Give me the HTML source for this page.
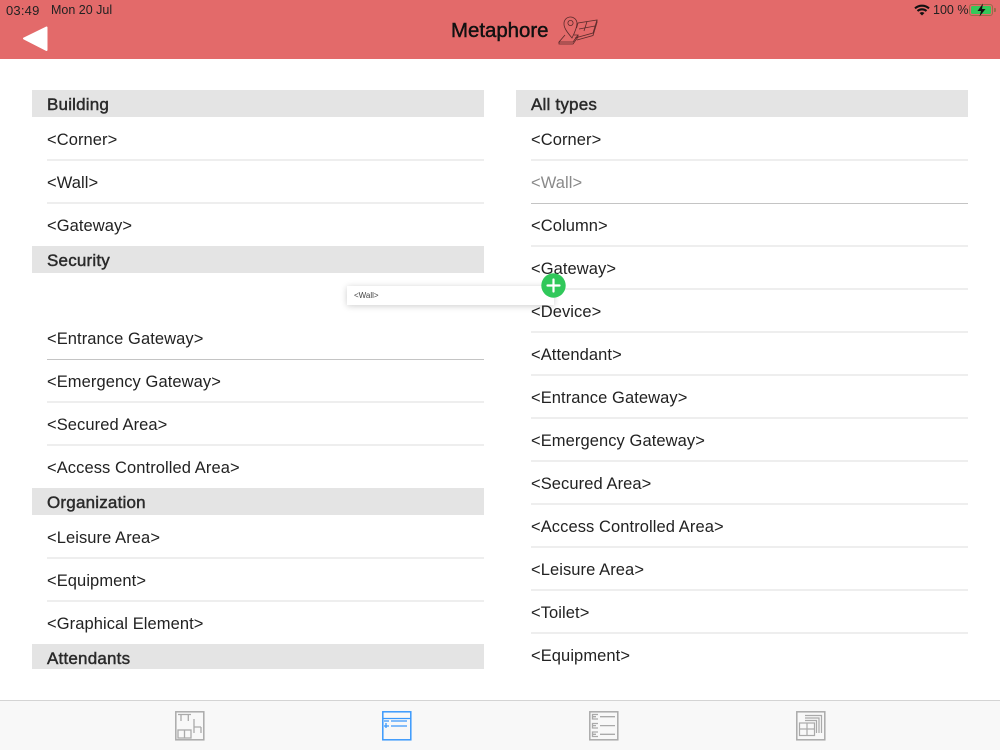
<!DOCTYPE html>
<html><head><meta charset="utf-8">
<style>
*{box-sizing:border-box}
html,body{margin:0;padding:0;width:1000px;height:750px;overflow:hidden;background:#fff;font-family:"Liberation Sans",sans-serif;color:#1a1a1a}
.a{position:absolute}
.t{position:absolute;font-size:16.5px;line-height:20px;height:20px;white-space:nowrap;color:#222;letter-spacing:.08px;margin-top:.6px}
.h{position:absolute;background:#e4e4e4;height:27px}
.ht{position:absolute;font-size:17px;font-weight:400;line-height:20px;color:#2a2a2a;-webkit-text-stroke:.45px #2a2a2a;white-space:nowrap;letter-spacing:.2px;margin:.6px 0 0 1px}
.d{position:absolute;height:2px;background:#eeeeee}
.k{position:absolute;height:1px;background:#c4c4c4}
</style></head><body>
<div class="a" style="left:0;top:0;width:1000px;height:59px;background:#e36a6a"></div>
<div class="a" style="left:6px;top:3px;font-size:13px;line-height:15px;color:#222;letter-spacing:.2px;white-space:nowrap">03:49</div>
<div class="a" style="left:51px;top:3px;font-size:12.5px;line-height:15px;color:#222;white-space:nowrap">Mon 20 Jul</div>
<svg class="a" style="left:22px;top:26px" width="27" height="26" viewBox="0 0 27 26"><path d="M2 12.5 L24.5 1.5 V24 Z" fill="#fff" stroke="#fff" stroke-width="2" stroke-linejoin="round"/></svg>
<div class="a" style="left:451px;top:19.5px;font-size:20.4px;line-height:22px;font-weight:400;color:#111;-webkit-text-stroke:.45px #111;white-space:nowrap">Metaphore</div>
<svg class="a" style="left:558px;top:16px" width="42" height="29" viewBox="0 0 42 29" fill="none" stroke="#5a2b2b" stroke-width=".8"><path d="M14 22 C9 16 6 12 6 8 A6.5 6.5 0 0 1 19 7 C19 11 17 16 14 22Z"/><circle cx="12.5" cy="7" r="2.6"/><path d="M7 19 L1 26 H15 L20 19 H16"/><path d="M1 26 V28 H15 L20 21 V19"/><path d="M18.5 12 L20 7 L39 4 L35 17 L17 22"/><path d="M39 4 V6.5 L35 19.5 L19 24"/><path d="M21 13 L37 10 M29 5.5 L26 15"/></svg>
<svg class="a" style="left:914px;top:4px" width="16" height="12" viewBox="0 0 16 12" fill="none" stroke="#111" stroke-width="2.1"><path d="M1 4.4 C5 .8 11 .8 15 4.4"/><path d="M3.5 7 C6 4.8 10 4.8 12.5 7"/><path d="M8 11.5 L5.5 9 C7 7.8 9 7.8 10.5 9 Z" fill="#111" stroke="none"/></svg>
<div class="a" style="left:933px;top:3px;font-size:12.5px;line-height:15px;color:#222;white-space:nowrap">100 %</div>
<div class="a" style="left:969px;top:4px;width:24px;height:12px;border:1px solid #9a6a4a;border-radius:3px;padding:1px"><div style="width:100%;height:100%;background:#35c759;border-radius:1.5px"></div></div>
<div class="a" style="left:993.5px;top:8px;width:2px;height:4px;background:#9a6a4a;border-radius:0 1px 1px 0"></div>
<svg class="a" style="left:975px;top:3px" width="13" height="14" viewBox="0 0 13 14"><path d="M8 0.5 L2.5 8 H6 L4.5 13.5 L10.5 6 H7 Z" fill="#111"/></svg>

<div class="h" style="left:32px;top:90px;width:452px"></div>
<div class="ht" style="left:46px;top:94px">Building</div>
<div class="t" style="left:47px;top:129px">&lt;Corner&gt;</div>
<div class="d" style="left:47px;top:159px;width:437px"></div>
<div class="t" style="left:47px;top:172px">&lt;Wall&gt;</div>
<div class="d" style="left:47px;top:202px;width:437px"></div>
<div class="t" style="left:47px;top:215px">&lt;Gateway&gt;</div>
<div class="h" style="left:32px;top:246px;width:452px"></div>
<div class="ht" style="left:46px;top:250px">Security</div>
<div class="t" style="left:47px;top:328px">&lt;Entrance Gateway&gt;</div>
<div class="k" style="left:47px;top:359px;width:437px"></div>
<div class="t" style="left:47px;top:371px">&lt;Emergency Gateway&gt;</div>
<div class="d" style="left:47px;top:401px;width:437px"></div>
<div class="t" style="left:47px;top:414px">&lt;Secured Area&gt;</div>
<div class="d" style="left:47px;top:444px;width:437px"></div>
<div class="t" style="left:47px;top:457px">&lt;Access Controlled Area&gt;</div>
<div class="h" style="left:32px;top:488px;width:452px"></div>
<div class="ht" style="left:46px;top:492px">Organization</div>
<div class="t" style="left:47px;top:527px">&lt;Leisure Area&gt;</div>
<div class="d" style="left:47px;top:557px;width:437px"></div>
<div class="t" style="left:47px;top:570px">&lt;Equipment&gt;</div>
<div class="d" style="left:47px;top:600px;width:437px"></div>
<div class="t" style="left:47px;top:613px">&lt;Graphical Element&gt;</div>
<div class="h" style="left:32px;top:644px;width:452px;height:25px"></div>
<div class="ht" style="left:46px;top:648px">Attendants</div>

<div class="h" style="left:516px;top:90px;width:452px"></div>
<div class="ht" style="left:530px;top:94px">All types</div>
<div class="t" style="left:531px;top:129px">&lt;Corner&gt;</div>
<div class="d" style="left:531px;top:159px;width:437px"></div>
<div class="t" style="left:531px;top:172px;color:#8a8a8a">&lt;Wall&gt;</div>
<div class="k" style="left:531px;top:203px;width:437px"></div>
<div class="t" style="left:531px;top:215px">&lt;Column&gt;</div>
<div class="d" style="left:531px;top:245px;width:437px"></div>
<div class="t" style="left:531px;top:258px">&lt;Gateway&gt;</div>
<div class="d" style="left:531px;top:288px;width:437px"></div>
<div class="t" style="left:531px;top:301px">&lt;Device&gt;</div>
<div class="d" style="left:531px;top:331px;width:437px"></div>
<div class="t" style="left:531px;top:344px">&lt;Attendant&gt;</div>
<div class="d" style="left:531px;top:374px;width:437px"></div>
<div class="t" style="left:531px;top:387px">&lt;Entrance Gateway&gt;</div>
<div class="d" style="left:531px;top:417px;width:437px"></div>
<div class="t" style="left:531px;top:430px">&lt;Emergency Gateway&gt;</div>
<div class="d" style="left:531px;top:460px;width:437px"></div>
<div class="t" style="left:531px;top:473px">&lt;Secured Area&gt;</div>
<div class="d" style="left:531px;top:503px;width:437px"></div>
<div class="t" style="left:531px;top:516px">&lt;Access Controlled Area&gt;</div>
<div class="d" style="left:531px;top:546px;width:437px"></div>
<div class="t" style="left:531px;top:559px">&lt;Leisure Area&gt;</div>
<div class="d" style="left:531px;top:589px;width:437px"></div>
<div class="t" style="left:531px;top:602px">&lt;Toilet&gt;</div>
<div class="d" style="left:531px;top:632px;width:437px"></div>
<div class="t" style="left:531px;top:645px">&lt;Equipment&gt;</div>

<div class="a" style="left:347px;top:286px;width:207px;height:19px;background:#fff;box-shadow:0 1px 7px rgba(0,0,0,.2)"></div>
<div class="a" style="left:354px;top:290px;font-size:8px;line-height:11px;color:#444;white-space:nowrap">&lt;Wall&gt;</div>
<svg class="a" style="left:541px;top:273px" width="25" height="25" viewBox="0 0 25 25"><circle cx="12.5" cy="12.5" r="12.2" fill="#30c85a"/><path d="M12.5 6.5 V18.5 M6.5 12.5 H18.5" stroke="#fff" stroke-width="2.2" stroke-linecap="round"/></svg>

<div class="a" style="left:0;top:700px;width:1000px;height:50px;background:#f8f8f8;border-top:1px solid #d4d4d4"></div>
<svg class="a" style="left:175px;top:711px" width="30" height="30" viewBox="0 0 30 30" fill="none" stroke="#aaa" stroke-width="1.3"><rect x=".8" y=".8" width="28" height="28" stroke-width="1.5"/><path d="M3 3.5 H16 M6 3.5 V10 M13.3 3.5 V10"/><path d="M19 8 V22 M19 16 H26 M26 16 V22"/><rect x="3" y="19" width="13" height="8"/><path d="M9.5 19 V27"/></svg>
<svg class="a" style="left:382px;top:711px" width="30" height="30" viewBox="0 0 30 30" fill="none" stroke="#3b99fc" stroke-width="1.3"><rect x=".8" y=".8" width="28" height="28" stroke-width="1.5"/><path d="M1 7.5 H29"/><path d="M2 10 H7 M9 10 H25 M9 15 H25 M2 15 H7 M4 12 V17"/></svg>
<svg class="a" style="left:589px;top:711px" width="30" height="30" viewBox="0 0 30 30" fill="none" stroke="#aaa" stroke-width="1.3"><rect x=".8" y=".8" width="28" height="28" stroke-width="1.5"/><path d="M9 3.5 H3.5 V8 H9 M3.5 5.7 H7 M11 5.7 H26"/><path d="M9 12.5 H3.5 V17 H9 M3.5 14.6 H7 M11 14.6 H26"/><path d="M9 21 H3.5 V25.5 H9 M3.5 23.3 H7 M11 23.3 H26"/></svg>
<svg class="a" style="left:796px;top:711px" width="30" height="30" viewBox="0 0 30 30" fill="none" stroke="#aaa" stroke-width="1.2"><rect x=".8" y=".8" width="28" height="28" stroke-width="1.5"/><rect x="3.5" y="12" width="15" height="12.5"/><path d="M11 12 V24.5 M3.5 18 H18.5"/><path d="M9 9.5 H20.5 V22 M9 7 H23 V22 M9 4.5 H25.5 V22"/></svg>
</body></html>
